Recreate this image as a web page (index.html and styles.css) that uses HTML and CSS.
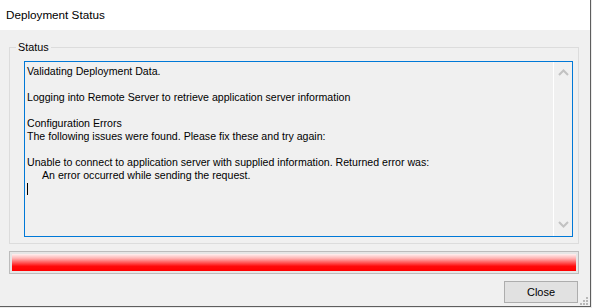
FILE: index.html
```html
<!DOCTYPE html>
<html>
<head>
<meta charset="utf-8">
<link rel="stylesheet" href="styles.css">
</head>
<body>
<div class="window">
  <div class="titlebar">Deployment Status</div>
  <div class="client">
    <fieldset class="group">
      <legend class="group-label">Status</legend>
      <div class="textbox">
        <div class="log"><div class="line">Validating Deployment Data.</div><div class="line"></div><div class="line">Logging into Remote Server to retrieve application server information</div><div class="line"></div><div class="line">Configuration Errors</div><div class="line">The following issues were found. Please fix these and try again:</div><div class="line"></div><div class="line">Unable to connect to application server with supplied information. Returned error was:</div><div class="line indent">An error occurred while sending the request.</div><div class="line"><span class="caret"></span></div></div>
        <div class="scrollbar">
          <svg class="arrow" width="11" height="7" viewBox="0 0 11 7"><polyline points="1,6 5.5,1.5 10,6" fill="none" stroke="#c2c2c2" stroke-width="2"/></svg>
          <svg class="arrow" width="11" height="7" viewBox="0 0 11 7"><polyline points="1,1 5.5,5.5 10,1" fill="none" stroke="#c2c2c2" stroke-width="2"/></svg>
        </div>
      </div>
    </fieldset>
    <div class="progress"><div class="progress-fill"></div></div>
    <div class="buttons"><button class="btn">Close</button></div>
    <svg class="grip" width="9" height="9" viewBox="0 0 9 9">
      <rect x="6" y="0" width="2" height="2" fill="#b8b8b8"/>
      <rect x="3" y="3" width="2" height="2" fill="#b8b8b8"/>
      <rect x="6" y="3" width="2" height="2" fill="#b8b8b8"/>
      <rect x="0" y="6" width="2" height="2" fill="#b8b8b8"/>
      <rect x="3" y="6" width="2" height="2" fill="#b8b8b8"/>
      <rect x="6" y="6" width="2" height="2" fill="#b8b8b8"/>
    </svg>
  </div>
</div>
</body>
</html>
```
FILE: styles.css
```css
* { box-sizing: border-box; }
html, body { margin: 0; padding: 0; }
body {
  width: 592px;
  height: 308px;
  background: #eaeaea;
  font-family: "Liberation Sans", Arial, sans-serif;
  font-size: 11px;
  color: #000;
  overflow: hidden;
}
.window {
  width: 591px;
  height: 307px;
  border-right: 1px solid #5e5e5e;
  border-bottom: 1px solid #5e5e5e;
  display: flex;
  flex-direction: column;
  background: #f0f0f0;
}
.titlebar {
  height: 30px;
  background: #fff;
  padding-left: 6px;
  font-size: 11.7px;
  line-height: 30px;
  color: #000;
}
.client {
  position: relative;
  flex: 1;
  display: flex;
  flex-direction: column;
  padding-top: 11px;
}
.group {
  margin: 0 0 0 9px;
  width: 570px;
  border: 1px solid #dcdcdc;
  padding: 0 5px 6px 6px;
  min-inline-size: 0;
}
.group-label {
  padding: 0 2px;
  font-size: 10.8px;
  line-height: 13px;
}
.textbox {
  margin: 7px 0 0 8px;
  width: 549px;
  height: 176px;
  border: 1px solid #0078d7;
  display: flex;
  background: #f0f0f0;
}
.log {
  flex: 1;
  padding: 3px 0 0 2px;
  font-size: 10.6px;
  line-height: 13px;
  white-space: nowrap;
}
.line { height: 13px; }
.indent { padding-left: 15px; }
.caret {
  display: inline-block;
  width: 1px;
  height: 12px;
  background: #000;
  vertical-align: top;
  margin-top: 1px;
}
.scrollbar {
  width: 19px;
  border-left: 1px solid #fff;
  display: flex;
  flex-direction: column;
  justify-content: space-between;
  align-items: center;
  padding: 7px 0 8px 0;
}
.arrow { display: block; }
.progress {
  margin: 7px 0 0 9px;
  width: 570px;
  height: 23px;
  border: 1px solid #bcbcbc;
  padding: 2px;
  background: #e6e6e6;
}
.progress-fill {
  height: 100%;
  background: linear-gradient(#fff0f0 0%, #ffb4b4 25%, #ff5a5a 50%, #ff0a0a 72%, #ff0000 100%);
}
.buttons {
  display: flex;
  justify-content: flex-end;
  padding-right: 12px;
  margin-top: 7px;
}
.btn {
  width: 74px;
  height: 22px;
  background: #e1e1e1;
  border: 1px solid #adadad;
  font-family: "Liberation Sans", Arial, sans-serif;
  font-size: 11px;
  color: #000;
  padding: 0;
  margin: 0;
}
.grip {
  position: absolute;
  right: 1px;
  bottom: 0px;
}
```
